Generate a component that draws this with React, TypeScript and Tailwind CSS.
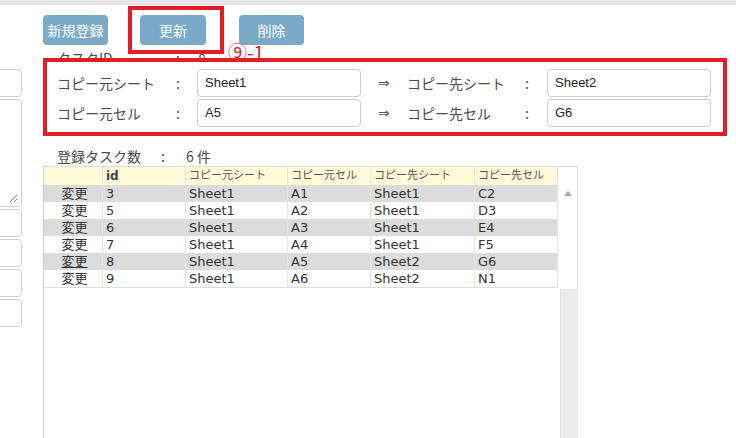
import React from "react";

const ROWS = [
  { id: "3", srcSheet: "Sheet1", srcCell: "A1", dstSheet: "Sheet1", dstCell: "C2" },
  { id: "5", srcSheet: "Sheet1", srcCell: "A2", dstSheet: "Sheet1", dstCell: "D3" },
  { id: "6", srcSheet: "Sheet1", srcCell: "A3", dstSheet: "Sheet1", dstCell: "E4" },
  { id: "7", srcSheet: "Sheet1", srcCell: "A4", dstSheet: "Sheet1", dstCell: "F5" },
  { id: "8", srcSheet: "Sheet1", srcCell: "A5", dstSheet: "Sheet2", dstCell: "G6" },
  { id: "9", srcSheet: "Sheet1", srcCell: "A6", dstSheet: "Sheet2", dstCell: "N1" },
];

function LeftBox({ tall }: { tall?: boolean }) {
  return (
    <div
      className={`relative w-[60px] -ml-[38px] rounded-[4px] border border-[#cfcfcf] bg-white ${
        tall ? "h-[108px]" : "h-[28px]"
      }`}
    >
      {tall && (
        <svg className="absolute right-[3px] bottom-[3px]" width="9" height="9" viewBox="0 0 9 9">
          <path d="M8 1 L1 8 M8 5 L5 8" stroke="#888" strokeWidth="1" />
        </svg>
      )}
    </div>
  );
}

function FieldInput({ value }: { value: string }) {
  return (
    <div className="w-[164px] h-[28px] flex items-center pl-[7px] rounded-[4px] border border-[#cccccc] bg-white font-['Liberation_Sans',sans-serif] text-[13px] text-[#222]">
      {value}
    </div>
  );
}

function CopyRow({
  srcLabel,
  srcValue,
  dstLabel,
  dstValue,
}: {
  srcLabel: string;
  srcValue: string;
  dstLabel: string;
  dstValue: string;
}) {
  return (
    <div className="flex items-center h-[28px] text-[14px] text-[#4a4a4a]">
      <span className="w-[119px]">{srcLabel}</span>
      <span className="w-[21px]">:</span>
      <FieldInput value={srcValue} />
      <span className="ml-[17px] w-[29px] font-['DejaVu_Sans',sans-serif] text-[14px] text-[#555]">⇒</span>
      <span className="w-[118px]">{dstLabel}</span>
      <span className="w-[22px]">:</span>
      <FieldInput value={dstValue} />
    </div>
  );
}

const CELL = "h-full flex items-center pl-[3px] border-r border-[#e4e4e4]";

export default function App() {
  return (
    <div className="w-[736px] h-[438px] overflow-hidden bg-white font-['Noto_Sans_CJK_JP',sans-serif]">
      <div className="h-[5px] bg-[#e6e6e6]" />
      <div className="flex">
        {/* left form, mostly scrolled off */}
        <div className="w-[22px] overflow-hidden pt-[64px] flex flex-col gap-[2px]">
          <LeftBox />
          <LeftBox tall />
          <LeftBox />
          <LeftBox />
          <LeftBox />
          <LeftBox />
        </div>

        <div className="ml-[21px] flex flex-col">
          <div className="mt-[10px] flex h-[30px] text-[14px] text-white">
            <button className="w-[65px] h-[30px] rounded-[4px] bg-[#7aaac8]">新規登録</button>
            <div className="relative ml-[32px]">
              <button className="w-[66px] h-[30px] rounded-[4px] bg-[#7aaac8]">更新</button>
              <div className="absolute -left-[12px] -top-[9px] w-[96px] h-[48px] border-4 border-[#e31e25]" />
              <span className="absolute left-[88px] top-[27px] whitespace-nowrap text-[19px] leading-[19px] text-[#e31e25]">
                ⑨-1
              </span>
            </div>
            <button className="ml-[33px] w-[65px] h-[30px] rounded-[4px] bg-[#7aaac8]">削除</button>
          </div>

          <div className="h-[13px] overflow-hidden">
            <div className="flex pt-[3px] pl-[14px] text-[14px] leading-[20px] text-[#4a4a4a]">
              <span className="w-[119px]">タスクID</span>
              <span className="w-[22px]">:</span>
              <span>8</span>
            </div>
          </div>

          <div className="w-[684px] h-[78px] border-4 border-[#e31e25] bg-white pt-[7px] pl-[10px] flex flex-col gap-[2px]">
            <CopyRow srcLabel="コピー元シート" srcValue="Sheet1" dstLabel="コピー先シート" dstValue="Sheet2" />
            <CopyRow srcLabel="コピー元セル" srcValue="A5" dstLabel="コピー先セル" dstValue="G6" />
          </div>

          <div className="mt-[10px] h-[20px] flex items-center pl-[14px] text-[14px] text-[#4a4a4a]">
            <span className="w-[104px]">登録タスク数</span>
            <span className="w-[25px]">:</span>
            <span>6&nbsp;件</span>
          </div>

          <div className="flex h-[280px] font-['DejaVu_Sans','Noto_Sans_CJK_JP',sans-serif]">
            <div className="flex flex-col border-l border-[#cccccc]">
              <div className="flex h-[19px] bg-[#fffbd9] border-t border-[#dddddd] text-[11px] text-[#555]">
                <div className={`${CELL} w-[59px]`} />
                <div className={`${CELL} w-[83px] font-bold text-[12px] text-[#444]`}>id</div>
                <div className={`${CELL} w-[102px]`}>コピー元シート</div>
                <div className={`${CELL} w-[83px]`}>コピー元セル</div>
                <div className={`${CELL} w-[104px]`}>コピー先シート</div>
                <div className={`${CELL} w-[83px]`}>コピー先セル</div>
              </div>
              {ROWS.map((row, i) => (
                <div
                  key={row.id}
                  className={`flex h-[17px] text-[13px] text-[#333] ${
                    i % 2 === 0 ? "bg-[#dcdcdc]" : "bg-white"
                  } ${i === ROWS.length - 1 ? "border-b border-[#dddddd] h-[18px]" : ""}`}
                >
                  <div className={`${CELL} w-[59px] justify-center pl-0`}>
                    <span className={row.id === "8" ? "underline" : ""}>変更</span>
                  </div>
                  <div className={`${CELL} w-[83px]`}>{row.id}</div>
                  <div className={`${CELL} w-[102px]`}>{row.srcSheet}</div>
                  <div className={`${CELL} w-[83px]`}>{row.srcCell}</div>
                  <div className={`${CELL} w-[104px]`}>{row.dstSheet}</div>
                  <div className={`${CELL} w-[83px]`}>{row.dstCell}</div>
                </div>
              ))}
            </div>

            {/* scrollbar */}
            <div className="w-[20px] flex flex-col">
              <div className="h-[19px] border-t border-r border-[#dddddd] bg-white" />
              <div className="h-[104px] border-r border-[#dddddd] bg-white flex justify-center pt-[6px]">
                <svg width="8" height="5" viewBox="0 0 8 5">
                  <path d="M4 0 L8 5 L0 5 Z" fill="#a8a8a8" />
                </svg>
              </div>
              <div className="flex-1 ml-[2px] bg-[#ececec] border-l border-[#e0e0e0]" />
            </div>
          </div>
        </div>
      </div>
    </div>
  );
}
